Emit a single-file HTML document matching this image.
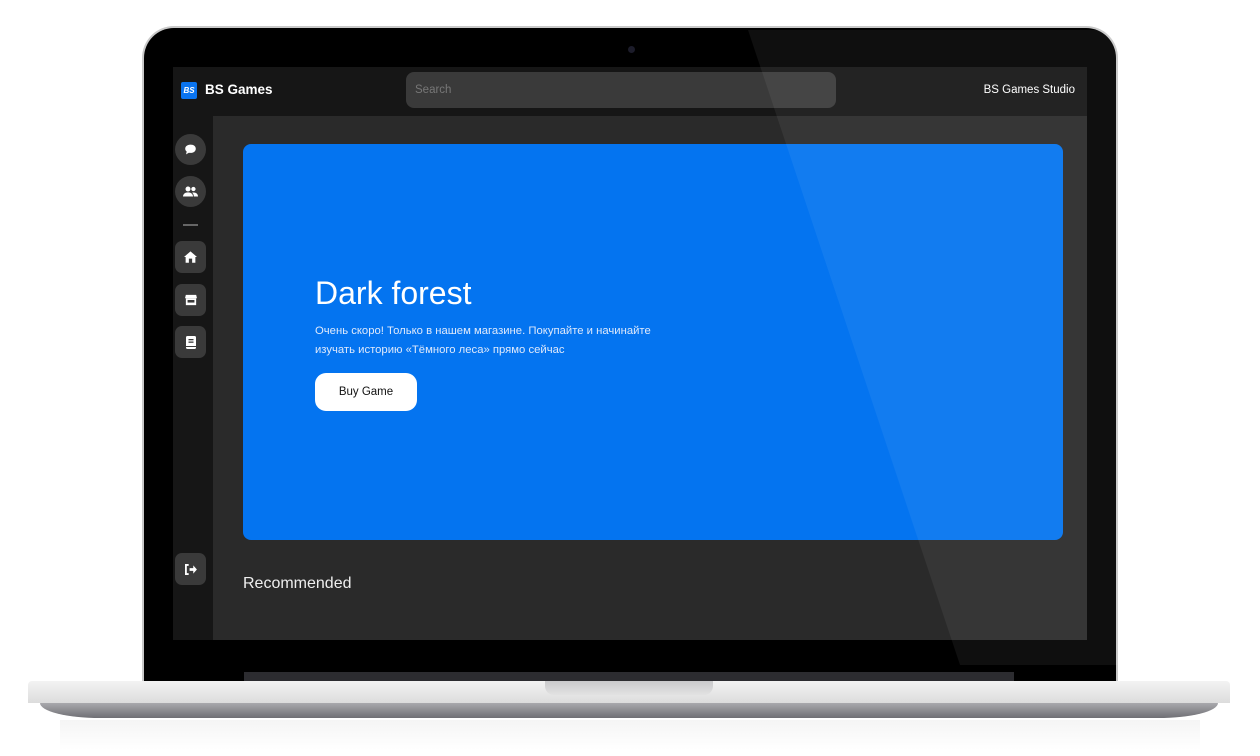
<!DOCTYPE html>
<html><head><meta charset="utf-8"><style>
*{margin:0;padding:0;box-sizing:border-box}
body{width:1260px;height:756px;background:#fff;position:relative;overflow:hidden;font-family:"Liberation Sans",Arial,sans-serif}
.abs{position:absolute}
.lid{left:142px;top:26px;width:976px;height:660px;border-radius:32px 32px 0 0;background:#c9c9c9}
.lid2{left:144px;top:28px;width:972px;height:656px;border-radius:30px 30px 0 0;background:#000}
.screen{left:173px;top:67px;width:914px;height:573px;background:#2a2a2a;overflow:hidden}
.hdr{left:0;top:0;width:914px;height:49px;background:#161616}
.side{left:0;top:49px;width:40px;height:524px;background:#161616}
.circ{left:2px;width:31px;height:31px;border-radius:50%;background:#3a3a3a}
.sq{left:2px;width:31px;height:32px;border-radius:7px;background:#3a3a3a}
.ic{display:flex;align-items:center;justify-content:center}
.banner{left:70px;top:77px;width:820px;height:396px;border-radius:8px;background:#0474f0}
</style></head><body>
<div class="abs lid"></div>
<div class="abs lid2"></div>
<div class="abs" style="left:628px;top:46px;width:7px;height:7px;border-radius:50%;background:#1c1c2a"></div>
<div class="abs screen">
  <div class="abs hdr">
    <div class="abs ic" style="left:8px;top:15px;width:16px;height:17px;background:#0a74f0;border-radius:2px;color:#fff;font-size:8px;font-style:italic;font-weight:bold">BS</div>
    <div class="abs" style="left:32px;top:15px;color:#fff;font-weight:bold;font-size:13.5px">BS Games</div>
    <div class="abs" style="left:233px;top:5px;width:430px;height:36px;background:#3a3a3a;border-radius:8px;color:#777;font-size:11.5px;padding:12px 9px">Search</div>
    <div class="abs" style="right:12px;top:17px;color:#fff;font-size:11.5px">BS Games Studio</div>
  </div>
  <div class="abs side">
    <div class="abs circ ic" style="top:18px"><svg width="13" height="13" viewBox="0 0 16 16"><path d="M8 2C4 2 1.5 4.3 1.5 7c0 1.4.7 2.6 1.8 3.5L2.5 14l3.5-2c.6.2 1.3.2 2 .2 4 0 6.5-2.3 6.5-5.2S12 2 8 2z" fill="#fff"/></svg></div>
    <div class="abs circ ic" style="top:60px"><svg width="15" height="13" viewBox="0 0 18 14"><circle cx="6" cy="4" r="3" fill="#fff"/><circle cx="12.5" cy="4" r="2.6" fill="#fff"/><path d="M0 13c0-3 2.5-5 6-5s6 2 6 5z" fill="#fff"/><path d="M13 13c0-2-.7-3.5-2-4.5 3.5-1 7 .8 7 4.5z" fill="#fff"/></svg></div>
    <div class="abs" style="left:10px;top:108px;width:15px;height:2px;background:#666"></div>
    <div class="abs sq ic" style="top:125px"><svg width="13" height="12" viewBox="0 0 16 14"><path d="M8 0L0 7h2v7h4V9h4v5h4V7h2z" fill="#fff"/></svg></div>
    <div class="abs sq ic" style="top:168px"><svg width="12" height="12" viewBox="0 0 14 14"><path d="M1 1h12l1 4H0z" fill="#fff"/><path d="M1 5h12v8H1z" fill="#fff"/><rect x="3" y="7" width="8" height="3" fill="#3a3a3a"/></svg></div>
    <div class="abs sq ic" style="top:210px"><svg width="10" height="13" viewBox="0 0 10 13"><rect x="0" y="0" width="10" height="13" rx="1.5" fill="#fff"/><rect x="2.5" y="3" width="5" height="1.3" fill="#3a3a3a"/><rect x="2.5" y="5.5" width="5" height="1.3" fill="#3a3a3a"/><rect x="0" y="10" width="10" height="1" fill="#3a3a3a"/></svg></div>
    <div class="abs sq ic" style="top:437px"><svg width="13" height="11" viewBox="0 0 14 12"><path d="M5 1H2v10h3" stroke="#fff" stroke-width="2" fill="none"/><path d="M6 4.5h4V1.5L14 6l-4 4.5V7.5H6z" fill="#fff"/></svg></div>
  </div>
  <div class="abs banner">
    <div class="abs" style="left:72px;top:131px;color:#fff;font-size:32px">Dark forest</div>
    <div class="abs" style="left:72px;top:178px;color:#dfe9fb;font-size:11.3px;line-height:19px;width:345px">Очень скоро! Только в нашем магазине. Покупайте и начинайте изучать историю «Тёмного леса» прямо сейчас</div>
    <div class="abs ic" style="left:72px;top:229px;width:102px;height:38px;background:#fff;border-radius:11px;color:#111;font-size:11.5px">Buy Game</div>
  </div>
  <div class="abs" style="left:70px;top:508px;color:#eee;font-size:16px">Recommended</div>
</div>
<svg class="abs" style="left:0;top:0" width="1260" height="756"><polygon points="748,30 1118,30 1118,665 960,665" fill="#fff" opacity="0.06"/></svg>
<div class="abs" style="left:244px;top:672px;width:770px;height:10px;background:#2c2c30"></div>
<div class="abs" style="left:28px;top:681px;width:1202px;height:22px;background:linear-gradient(#f3f3f3,#dcdcdc);border-radius:4px 4px 0 0"></div>
<div class="abs" style="left:40px;top:703px;width:1178px;height:15px;background:linear-gradient(#a9a9ad,#6f6f74);border-radius:0 0 60px 60px/0 0 15px 15px"></div>
<div class="abs" style="left:545px;top:681px;width:168px;height:14px;background:linear-gradient(#c9c9cb,#e2e2e2);border-radius:0 0 9px 9px"></div>
<div class="abs" style="left:60px;top:720px;width:1140px;height:30px;background:linear-gradient(#eeeeee,#fff);opacity:.6"></div>
</body></html>
